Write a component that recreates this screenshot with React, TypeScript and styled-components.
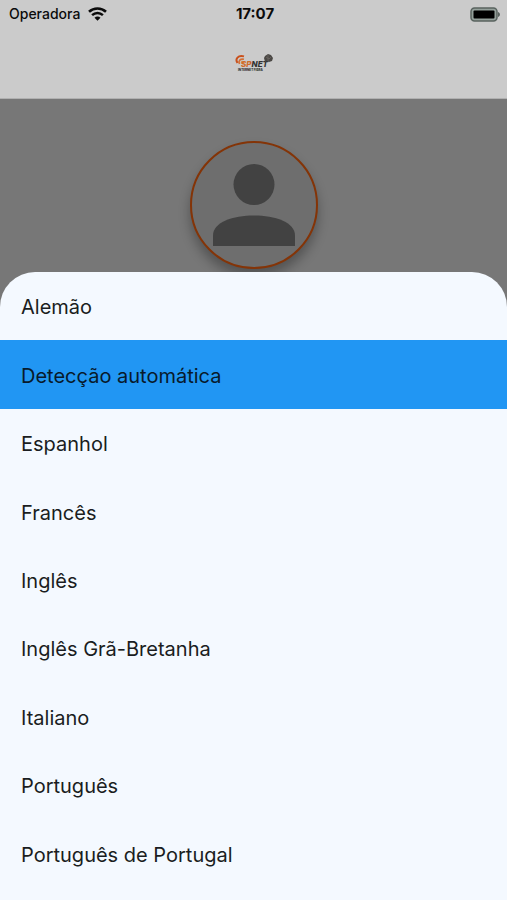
import React, { useState } from "react";
import styled, { createGlobalStyle } from "styled-components";

const GlobalStyle = createGlobalStyle`
  * { box-sizing: border-box; }
  html, body { margin: 0; }
  body {
    font-family: Inter, "Liberation Sans", sans-serif;
    background: #777777;
    color: #16191d;
  }
`;

const Screen = styled.div`
  position: relative;
  min-height: 100vh;
  overflow: hidden;
  background: #777777;
`;

const Header = styled.header`
  background: #cbcbcb;
  border-bottom: 1px solid #b0b0b0;
`;

const StatusBar = styled.div`
  display: grid;
  grid-template-columns: 1fr auto 1fr;
  align-items: center;
  height: 28px;
  padding: 0 6px 0 9px;
  font-size: 14px;
  line-height: 20px;
  color: #0b0b0b;
`;

const Carrier = styled.div`
  display: flex;
  align-items: center;
  gap: 8px;
  font-weight: 500;
`;

const Clock = styled.time`
  font-size: 15px;
  font-weight: 700;
`;

const BatterySlot = styled.div`
  display: flex;
  justify-content: flex-end;
`;

const Brand = styled.div`
  display: flex;
  justify-content: center;
  align-items: center;
  height: 70px;
`;

const Profile = styled.main`
  display: flex;
  justify-content: center;
  padding-top: 42px;
`;

const Avatar = styled.div`
  display: flex;
  justify-content: center;
  align-items: center;
  width: 128px;
  height: 128px;
  border: 2px solid #843407;
  border-radius: 50%;
  background: #6e6e6e;
  box-shadow: 0 8px 12px rgba(0, 0, 0, 0.3);
`;

const Overlay = styled.div`
  position: absolute;
  inset: 0;
  display: flex;
  padding-top: 272px;
`;

const Sheet = styled.ul`
  flex: 1;
  display: grid;
  grid-auto-rows: 1fr;
  margin: 0;
  padding: 0 0 12px;
  list-style: none;
  overflow: hidden;
  border-radius: 35px 35px 0 0;
  background: #f4f9ff;
`;

const Item = styled.li`
  display: flex;
`;

const Option = styled.button<{ $selected: boolean }>`
  flex: 1;
  padding: 2px 21px 0;
  border: 0;
  background: ${(p) => (p.$selected ? "#2196f3" : "transparent")};
  color: ${(p) => (p.$selected ? "#081a2b" : "#1a1d21")};
  font: inherit;
  font-size: 20px;
  line-height: 28px;
  text-align: left;
  cursor: pointer;
`;

const languages = [
  "Alemão",
  "Detecção automática",
  "Espanhol",
  "Francês",
  "Inglês",
  "Inglês Grã-Bretanha",
  "Italiano",
  "Português",
  "Português de Portugal",
];

const WifiIcon = () => (
  <svg width="19" height="14" viewBox="0 0 19 14" fill="none" aria-hidden="true">
    <path d="M1 4.800C5.800.3 13.200.3 18 4.800" stroke="#0b0b0b" strokeWidth="2.600" />
    <path d="M4.100 8.200c3.100-2.900 7.700-2.900 10.800 0" stroke="#0b0b0b" strokeWidth="2.500" />
    <path d="M9.500 13.800 6.500 10.800c1.600-1.600 4.400-1.600 6 0z" fill="#0b0b0b" />
  </svg>
);

const BatteryIcon = () => (
  <svg width="31" height="15" viewBox="0 0 31 15" aria-hidden="true">
    <rect x="1" y="1" width="26" height="13" rx="3.500" fill="#94a09b" stroke="#59635f" strokeWidth="1.500" />
    <rect x="3.500" y="3.500" width="21" height="8" rx="1" fill="#000" />
    <path d="M28 5c2.600.8 2.600 4.200 0 5z" fill="#59635f" />
  </svg>
);

const Logo = () => (
  <svg width="38" height="20" viewBox="0 0 38 20" role="img" aria-label="SPNET">
    <path d="M2.500 10C-.2 6 3 1.800 9 3.400" fill="none" stroke="#c9501c" strokeWidth="2" />
    <path d="M4.500 11C3 7.800 5.300 5.400 9 6.300" fill="none" stroke="#d46f35" strokeWidth="1.600" />
    <circle cx="7.500" cy="9.500" r="1.700" fill="#d98a43" />
    <text x="6" y="14" fontFamily="Inter, sans-serif" fontSize="8" fontWeight="800" fontStyle="italic" fill="#cf6b2b">
      SP<tspan fill="#333">NET</tspan>
    </text>
    <text x="3" y="18" fontFamily="Inter, sans-serif" fontSize="3" fontWeight="800" fill="#303030">
      INTERNET FIBRA
    </text>
    <path d="M29 5l1-2 3-2 3 1 2 3-1 3-3 1-2-1-2 1z" fill="#4b4845" />
    <path d="M31 4l3 2 2-2M33 2v6" fill="none" stroke="#77716c" strokeWidth=".6" />
  </svg>
);

const PersonIcon = () => (
  <svg width="82" height="82" viewBox="0 0 82 82" fill="#424242" aria-hidden="true">
    <circle cx="41" cy="20.500" r="20.500" />
    <path d="M0 82V71.500C0 58 20 51.500 41 51.500S82 58 82 71.500V82z" />
  </svg>
);

export default function App() {
  const [selected, setSelected] = useState("Detecção automática");

  return (
    <>
      <GlobalStyle />
      <Screen>
        <Header>
          <StatusBar>
            <Carrier>
              Operadora
              <WifiIcon />
            </Carrier>
            <Clock>17:07</Clock>
            <BatterySlot>
              <BatteryIcon />
            </BatterySlot>
          </StatusBar>
          <Brand>
            <Logo />
          </Brand>
        </Header>
        <Profile>
          <Avatar>
            <PersonIcon />
          </Avatar>
        </Profile>
        <Overlay>
          <Sheet aria-label="Idioma">
            {languages.map((name) => (
              <Item key={name}>
                <Option
                  type="button"
                  $selected={name === selected}
                  aria-pressed={name === selected}
                  onClick={() => setSelected(name)}
                >
                  {name}
                </Option>
              </Item>
            ))}
          </Sheet>
        </Overlay>
      </Screen>
    </>
  );
}
